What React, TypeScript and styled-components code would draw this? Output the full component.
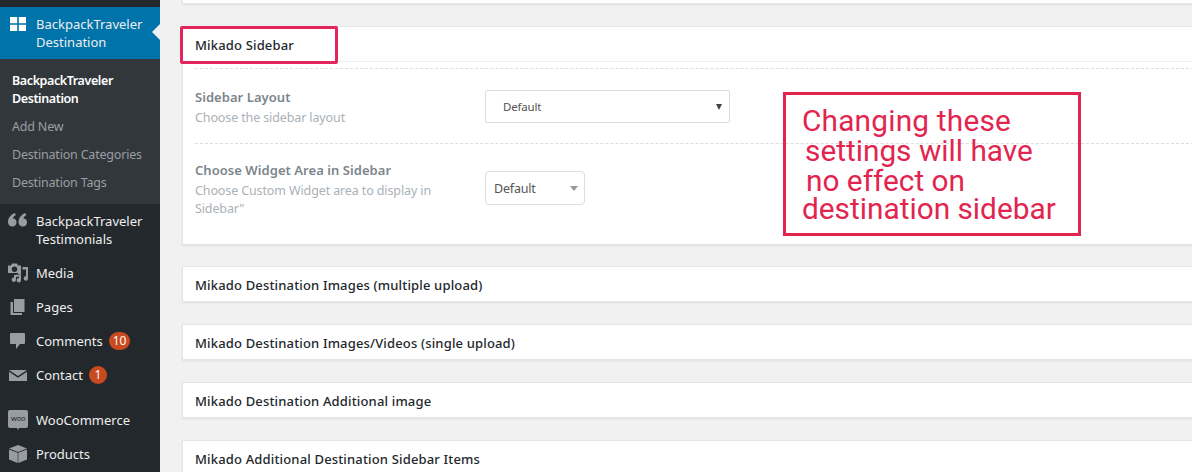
import styled, { createGlobalStyle } from "styled-components";

const GlobalStyle = createGlobalStyle`
html, body {
  margin: 0;
  padding: 0;
  height: 472px;
  overflow: hidden;
  background: #f1f1f1;
}
`;

const UI = `"Noto Sans", "Open Sans", sans-serif`;

const Page = styled.div`
  display: flex;
  width: 1192px;
  height: 472px;
  overflow: hidden;
  font-family: ${UI};
  font-size: 13px;
`;

/* ---------- admin menu ---------- */
const Sidebar = styled.nav`
  flex: 0 0 160px;
  background: #23282d;
  padding-top: 7px;
  overflow: hidden;
`;

const MenuItem = styled.div<{ $active?: boolean; $gap?: boolean }>`
  position: relative;
  display: flex;
  align-items: flex-start;
  padding: 8px 0 8px 36px;
  margin-top: ${(p) => (p.$gap ? "11px" : "0")};
  line-height: 18px;
  color: #eee;
  background: ${(p) => (p.$active ? "#0073aa" : "transparent")};
  ${(p) =>
    p.$active
      ? `&::after {
    content: "";
    position: absolute;
    right: 0;
    top: 17px;
    border: 8px solid transparent;
    border-right-color: #f1f1f1;
    border-left: 0;
  }`
      : ""}
`;

const MenuIcon = styled.svg<{ $active?: boolean }>`
  position: absolute;
  left: 8px;
  top: 7px;
  width: 20px;
  height: 20px;
  fill: ${(p) => (p.$active ? "#fff" : "#999da1")};
`;

const Badge = styled.span`
  display: inline-block;
  min-width: 10px;
  height: 18px;
  margin: 0 0 0 6px;
  padding: 0 4px;
  border-radius: 9px;
  background: #ca4a1f;
  color: #fff;
  font-size: 12px;
  line-height: 18px;
  text-align: center;
`;

const SubMenu = styled.div`
  background: #32373c;
  padding: 8px 0 7px;
`;

const SubItem = styled.div<{ $current?: boolean }>`
  padding: 5px 0 5px 12px;
  line-height: 18px;
  font-size: 12.5px;
  letter-spacing: ${(p) => (p.$current ? "-0.4px" : "-0.19px")};
  color: ${(p) => (p.$current ? "#fff" : "#9a9ea2")};
  font-weight: ${(p) => (p.$current ? 600 : 400)};
`;

/* ---------- content ---------- */
const Main = styled.main`
  position: relative;
  flex: 1;
  min-width: 0;
  padding-left: 22px;
  overflow: hidden;
`;

const Panel = styled.section<{ $stub?: boolean; $after?: number }>`
  margin: 0 -20px ${(p) => p.$after ?? 22}px 0;
  background: #fff;
  border: 1px solid #e5e5e5;
  border-top-width: ${(p) => (p.$stub ? 0 : "1px")};
  box-shadow: 0 1px 2px rgba(0, 0, 0, 0.08);
  height: ${(p) => (p.$stub ? "3px" : "auto")};
`;

const PanelTitle = styled.h2`
  margin: 0;
  padding: 0 12px;
  height: 34px;
  font-size: 13px;
  font-weight: 500;
  line-height: 36px;
  letter-spacing: 0.16px;
  color: #23282d;
`;

const PanelBody = styled.div`
  border-top: 1px solid #eee;
  padding: 6px 12px 0;
  height: 176px;
`;

const Field = styled.div<{ $height: number }>`
  display: flex;
  height: ${(p) => p.$height}px;
  border-top: 1px dashed #ddd;
`;

const FieldText = styled.div`
  flex: 0 0 290px;
`;

const FieldLabel = styled.div<{ $top: number }>`
  margin-top: ${(p) => p.$top}px;
  font-weight: 600;
  line-height: 20px;
  letter-spacing: 0.05px;
  color: #7b858c;
`;

const FieldHelp = styled.div`
  width: 250px;
  font-size: 12.5px;
  line-height: 18px;
  margin-top: 2px;
  letter-spacing: -0.12px;
  color: #aab1b7;
`;

const Select = styled.div<{ $wide?: boolean }>`
  display: flex;
  align-items: center;
  justify-content: space-between;
  box-sizing: border-box;
  width: ${(p) => (p.$wide ? "245px" : "100px")};
  height: ${(p) => (p.$wide ? "33px" : "34px")};
  margin-top: ${(p) => (p.$wide ? "21px" : "27px")};
  padding: ${(p) => (p.$wide ? "0 7px 0 17px" : "1px 6px 0 8px")};
  background: #fff;
  border: 1px solid #ddd;
  border-radius: ${(p) => (p.$wide ? "2px" : "4px")};
  font-size: ${(p) => (p.$wide ? "11.5px" : "12.5px")};
  letter-spacing: -0.2px;
  color: #555;
`;

const Caret = styled.i<{ $dark?: boolean }>`
  display: block;
  width: 0;
  height: 0;
  border-style: solid;
  border-color: ${(p) => (p.$dark ? "#444" : "#999")} transparent transparent;
  border-width: ${(p) => (p.$dark ? "6px 3px 0" : "5px 4px 0")};
`;

/* ---------- red annotations ---------- */
const TitleMark = styled.div`
  position: absolute;
  left: 20px;
  top: 26px;
  box-sizing: border-box;
  width: 158px;
  height: 38px;
  border: 3px solid #e2255a;
  border-radius: 2px;
`;

const Note = styled.div`
  position: absolute;
  left: 623px;
  top: 92px;
  box-sizing: border-box;
  width: 298px;
  height: 144px;
  background: transparent;
  border: 3px solid #e2254f;
  color: #e2254f;
  font-family: Roboto, sans-serif;
  font-size: 29.8px;
  padding: 11px 0 0 15px;
`;

const NoteLine = styled.div<{ $indent: number; $height: number; $track?: number }>`
  margin-left: ${(p) => p.$indent}px;
  height: ${(p) => p.$height}px;
  line-height: 30px;
  letter-spacing: ${(p) => p.$track ?? 0}px;
  white-space: nowrap;
`;

const icons: Record<string, JSX.Element> = {
  grid: <path d="M2 3h7.200v6.300H2zM10.800 3H18v6.300h-7.200zM2 10.700h7.200V17H2zM10.800 10.700H18V17h-7.200z" />,
  quote: (
    <path d="M0 11c0-4 2.500-7 6.500-9L8 4C6 5 5 6.500 5 7.500c2 0 3.500 1.500 3.500 3.700S7 15.500 4.500 15.500C1.800 15.500 0 13.800 0 11zM10.500 11c0-4 2.500-7 6.500-9l1.500 2c-2 1-3 2.500-3 3.500 2 0 3.500 1.500 3.500 3.700S17.500 15.500 15 15.500c-2.700 0-4.500-1.700-4.500-4.500z" />
  ),
  media: (
    <path
      fillRule="evenodd"
      d="M0 2.500h3l1-2h5l1 2h3v8.500h-3v-1H0zM6.500 3.500a2.700 2.700 0 100 5.400 2.700 2.700 0 000-5.400zM14.500 4h5.500v11.500a2.200 2.200 0 11-2-2.200V6.500h-3.500zM6 12l7-.8v6a2.200 2.200 0 11-2-2.200v-1.500l-3 .4v2.800a2.200 2.200 0 11-2-2.200z"
    />
  ),
  pages: <path d="M6 2h10.500v13H6zM2.500 5H5v11h9v2H2.500z" />,
  comment: <path d="M3 2h13a1 1 0 011 1v9a1 1 0 01-1 1h-4l-4 5v-5H3a1 1 0 01-1-1V3a1 1 0 011-1z" />,
  mail: <path d="M1 5h18l-9 6zM1 6.800l9 6 9-6V16H1z" />,
  box: <path d="M10 1l9 3.500-9 3.600-9-3.600zM1 5.400l8.700 3.400V19L1 15.500zM19 5.400v10.100L10.300 19V8.800z" />,
};

const WooLabel = styled.text`
  font-family: ${UI};
  font-size: 7.500px;
  fill: #23282d;
  letter-spacing: -0.2px;
`;

const items = [
  { icon: "media", label: "Media" },
  { icon: "pages", label: "Pages" },
  { icon: "comment", label: "Comments", badge: "10" },
  { icon: "mail", label: "Contact", badge: "1" },
];

const panels = [
  "Mikado Destination Images (multiple upload)",
  "Mikado Destination Images/Videos (single upload)",
  "Mikado Destination Additional image",
  "Mikado Additional Destination Sidebar Items",
];

const App = () => {
  return (
    <Page>
      <GlobalStyle />
      <Sidebar>
        <MenuItem $active>
          <MenuIcon $active viewBox="0 0 20 20">{icons.grid}</MenuIcon>
          BackpackTraveler<br />Destination
        </MenuItem>
        <SubMenu>
          <SubItem $current>BackpackTraveler<br />Destination</SubItem>
          <SubItem>Add New</SubItem>
          <SubItem>Destination Categories</SubItem>
          <SubItem>Destination Tags</SubItem>
        </SubMenu>
        <MenuItem>
          <MenuIcon viewBox="0 0 20 20">{icons.quote}</MenuIcon>
          BackpackTraveler<br />Testimonials
        </MenuItem>
        {items.map((item) => (
          <MenuItem key={item.label}>
            <MenuIcon viewBox="0 0 20 20">{icons[item.icon]}</MenuIcon>
            {item.label}
            {item.badge && <Badge>{item.badge}</Badge>}
          </MenuItem>
        ))}
        <MenuItem $gap>
          <MenuIcon viewBox="0 0 20 20">
            <path d="M2 0h16a2 2 0 012 2v14a2 2 0 01-2 2h-7l-1 2-1-2H2a2 2 0 01-2-2V2a2 2 0 012-2z" />
            <WooLabel x="3" y="11">woo</WooLabel>
          </MenuIcon>
          WooCommerce
        </MenuItem>
        <MenuItem>
          <MenuIcon viewBox="0 0 20 20">{icons.box}</MenuIcon>
          Products
        </MenuItem>
      </Sidebar>
      <Main>
        <Panel $stub />
        <Panel $after={21}>
          <PanelTitle>Mikado Sidebar</PanelTitle>
          <PanelBody>
            <Field $height={74}>
              <FieldText>
                <FieldLabel $top={18}>Sidebar Layout</FieldLabel>
                <FieldHelp>Choose the sidebar layout</FieldHelp>
              </FieldText>
              <Select $wide>
                Default
                <Caret $dark />
              </Select>
            </Field>
            <Field $height={99}>
              <FieldText>
                <FieldLabel $top={16}>Choose Widget Area in Sidebar</FieldLabel>
                <FieldHelp>Choose Custom Widget area to display in Sidebar"</FieldHelp>
              </FieldText>
              <Select>
                Default
                <Caret />
              </Select>
            </Field>
          </PanelBody>
        </Panel>
        {panels.map((title) => (
          <Panel key={title}>
            <PanelTitle>{title}</PanelTitle>
          </Panel>
        ))}
        <TitleMark />
        <Note>
          <NoteLine $indent={1} $height={30} $track={0.2}>Changing these</NoteLine>
          <NoteLine $indent={4} $height={30}>settings will have</NoteLine>
          <NoteLine $indent={5} $height={28}>no effect on</NoteLine>
          <NoteLine $indent={1} $height={30}>destination sidebar</NoteLine>
        </Note>
      </Main>
    </Page>
  );
};

export default App;
